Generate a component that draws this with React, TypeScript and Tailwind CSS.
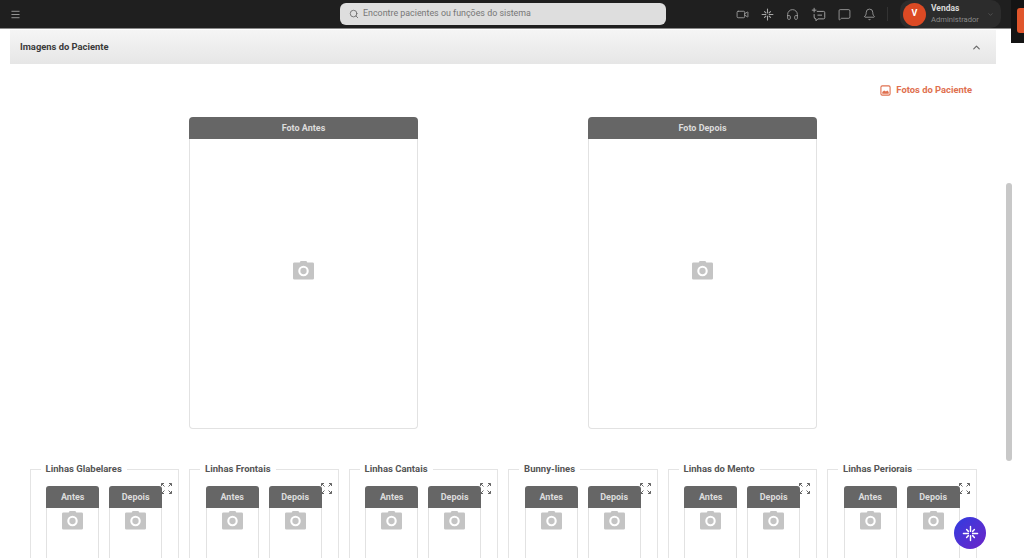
import { Bell, ChevronDown, ChevronUp, Headphones, Menu, MessageSquare, Search, Video } from "lucide-react";

const groups = ["Linhas Glabelares", "Linhas Frontais", "Linhas Cantais", "Bunny-lines", "Linhas do Mento", "Linhas Periorais"];

function CameraIcon({ className }: { className: string }) {
  return (
    <svg viewBox="0 0 24 22" className={className}>
      <path
        fill="#c4c4c4"
        fillRule="evenodd"
        d="M8 2.500 9 1h6l1 1.500h5.500a1.500 1.500 0 0 1 1.500 1.500v15a1.500 1.500 0 0 1-1.500 1.500h-19A1.500 1.500 0 0 1 1 19V4a1.500 1.500 0 0 1 1.500-1.500H8Zm4 3.500a5.500 5.500 0 1 0 0 11 5.500 5.500 0 0 0 0-11Zm0 2.200a3.300 3.300 0 1 1 0 6.600 3.300 3.300 0 0 1 0-6.600Z"
      />
    </svg>
  );
}

function SparkIcon({ className }: { className: string }) {
  return (
    <svg viewBox="0 0 24 24" fill="none" stroke="currentColor" strokeWidth="2" strokeLinecap="round" className={className}>
      <path d="M12 2v7M12 15v7M2 12h7M15 12h7M9 9 6.500 6.500M15 9l2.500-2.500M9 15l-2.500 2.500M15 15l2.500 2.500" />
    </svg>
  );
}

function ChatAddIcon({ className }: { className: string }) {
  return (
    <svg viewBox="0 0 24 24" fill="none" stroke="currentColor" strokeWidth="1.500" strokeLinecap="round" strokeLinejoin="round" className={className}>
      <path d="M5 2v6M2 5h6" />
      <path d="M10 7h10a2 2 0 0 1 2 2v8a2 2 0 0 1-2 2H11l-3 3v-3a3 3 0 0 1-3-3v-4" />
      <path d="M11 13h6" />
    </svg>
  );
}

function PhotoIcon({ className }: { className: string }) {
  return (
    <svg viewBox="0 0 12 12" className={className}>
      <rect x="1" y="1" width="10" height="10" rx="1.500" fill="none" stroke="currentColor" strokeWidth="1.200" />
      <path d="M2.500 9.500V7.500l2-1.500 2 1 1.500-1 1.500 1.500v2Z" fill="currentColor" />
    </svg>
  );
}

function ExpandIcon({ className }: { className: string }) {
  return (
    <svg viewBox="0 0 11 11" fill="none" stroke="currentColor" strokeWidth="1" className={className}>
      <path d="M.5 3V.5H3M.5 .5 3.500 3.500M8 .5h2.500V3M10.500 .5 7.500 3.500M.5 8v2.500H3M.5 10.500 3.500 7.500M8 10.500h2.500V8M10.500 10.500 7.500 7.500" />
    </svg>
  );
}

function PhotoCard({ title }: { title: string }) {
  return (
    <div className="w-[229px] h-[312px] flex flex-col">
      <div className="h-[22px] pt-px rounded-t-[4px] bg-[#666666] text-[#dcdcdc] text-[9px] font-bold flex items-center justify-center">{title}</div>
      <div className="flex-1 rounded-b-[4px] border border-t-0 border-[#e2e2e2] flex items-center justify-center pb-[26px]">
        <CameraIcon className="w-[23px] h-[21px]" />
      </div>
    </div>
  );
}

function SmallCard({ title }: { title: string }) {
  return (
    <div className="w-[53px] h-[90px] shrink-0">
      <div className="h-[22px] pt-px rounded-t-[3px] bg-[#666666] text-[#dcdcdc] text-[9px] font-bold flex items-center justify-center">{title}</div>
      <div className="h-[68px] border border-t-0 border-[#e2e2e2] flex justify-center pt-[2px]">
        <CameraIcon className="w-[23px] h-[21px]" />
      </div>
    </div>
  );
}

function AreaGroup({ name }: { name: string }) {
  return (
    <div className="relative h-[100px] border border-[#e4e4e4]">
      <span className="absolute -top-[7px] left-[10px] bg-white px-[5px] text-[9.500px] leading-[12px] font-bold text-[#555555] whitespace-nowrap">{name}</span>
      <ExpandIcon className="absolute top-[13px] right-[6px] w-[11px] h-[11px] text-[#666666]" />
      <div className="flex gap-[10px] pl-[15.600px] pt-[16px]">
        <SmallCard title="Antes" />
        <SmallCard title="Depois" />
      </div>
    </div>
  );
}

export default function App() {
  return (
    <div className="relative h-[558px] overflow-hidden bg-white font-['Roboto','Liberation_Sans',sans-serif]">
      <header className="h-[29px] bg-[#1f1f1f] border-b border-[#8a8a8a] flex items-center pl-[10px]">
        <Menu className="w-[11px] h-[11px] shrink-0 text-[#a0a0a0]" strokeWidth={2} />
        <div className="ml-[319px] w-[326px] h-[22px] shrink-0 rounded-[6px] bg-[#dedede] flex items-center pl-[9px] text-[#777777]">
          <Search className="w-[10px] h-[10px] text-[#666666]" strokeWidth={2} />
          <span className="ml-[4px] text-[8.900px]">Encontre pacientes ou funções do sistema</span>
        </div>
        <div className="ml-[70px] flex items-center gap-[12px] shrink-0 text-[#a8a8a8]">
          <Video className="w-[13px] h-[13px]" strokeWidth={1.500} />
          <SparkIcon className="w-[13px] h-[13px]" />
          <Headphones className="w-[13px] h-[13px]" strokeWidth={1.500} />
          <ChatAddIcon className="w-[15px] h-[15px]" />
          <MessageSquare className="w-[13px] h-[13px]" strokeWidth={1.500} />
          <Bell className="w-[13px] h-[13px]" strokeWidth={1.500} />
        </div>
        <div className="ml-[11px] w-px h-[14px] shrink-0 bg-[#333333]" />
        <div className="ml-[12px] w-[101px] h-[28px] shrink-0 rounded-[10px] bg-[#2c2c2c] flex items-center pl-[3px]">
          <div className="w-[23px] h-[23px] rounded-full bg-[#dc4a24] text-white text-[9px] font-bold flex items-center justify-center">V</div>
          <div className="ml-[5px] flex flex-col leading-[12px]">
            <span className="text-[8.500px] text-[#d8d8d8] font-bold">Vendas</span>
            <span className="text-[7.600px] text-[#8a8a8a]">Administrador</span>
          </div>
          <ChevronDown className="ml-[8px] w-[7px] h-[7px] text-[#666666]" />
        </div>
      </header>

      <section className="ml-[10px] mr-[28px] mt-px h-[34px] bg-gradient-to-b from-[#f5f5f5] to-[#e6e6e6] flex items-center justify-between pl-[10px] pr-[14px]">
        <span className="pt-px text-[9.400px] font-bold text-[#3a3a3a]">Imagens do Paciente</span>
        <ChevronUp className="w-[11px] h-[11px] text-[#666666]" strokeWidth={2.500} />
      </section>

      <div className="mt-[19px] mr-[52px] flex justify-end items-center gap-[5px] h-[14px] text-[#e0704f]">
        <PhotoIcon className="w-[11px] h-[11px]" />
        <span className="text-[9.400px] font-bold">Fotos do Paciente</span>
      </div>

      <div className="mt-[20px] ml-[189px] flex gap-[170px]">
        <PhotoCard title="Foto Antes" />
        <PhotoCard title="Foto Depois" />
      </div>

      <div className="mt-[40px] ml-[29.600px] w-[947px] grid grid-cols-6 gap-[10px]">
        {groups.map((name) => (
          <AreaGroup key={name} name={name} />
        ))}
      </div>

      {/* overlays */}
      <div className="absolute right-[12px] top-[183px] w-[6px] h-[278px] rounded-full bg-[#c8c8c8]" />
      <div className="absolute right-0 top-0 w-[13px] h-[43px] bg-[#141414]">
        <div className="absolute left-[6px] top-[8px] w-[7px] h-[25px] rounded-l-[3px] bg-[#e0552b]" />
      </div>
      <button className="absolute left-[954px] top-[517px] w-[32px] h-[32px] rounded-full bg-gradient-to-br from-[#2a3be0] to-[#6a22c8] flex items-center justify-center text-white">
        <SparkIcon className="w-[17px] h-[17px]" />
      </button>
    </div>
  );
}
